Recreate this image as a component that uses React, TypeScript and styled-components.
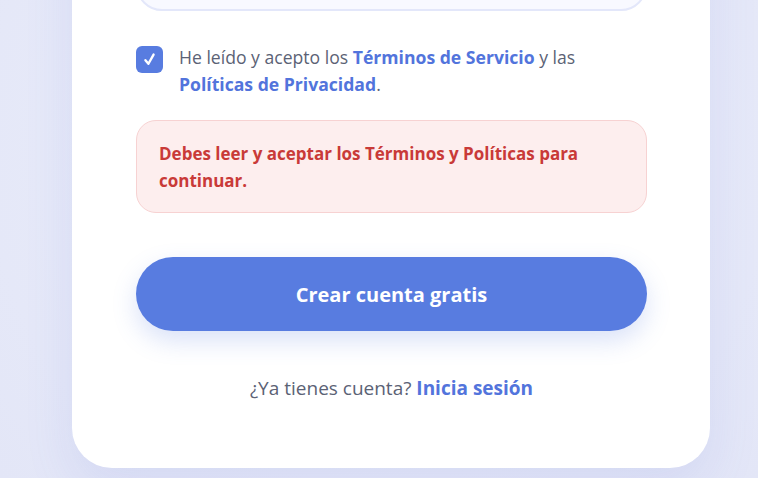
import { createGlobalStyle, styled } from "styled-components";

const GlobalStyle = createGlobalStyle`
    html, body {
        margin: 0;
        padding: 0;
        background: #e6e9f8;
        overflow: hidden;
    }
    body {
        font-family: "Open Sans", "Noto Sans", sans-serif;
    }
`;

const Page = styled.div`
    display: flow-root;
    min-height: 478px;
    padding-left: 72px;
    background: radial-gradient(circle at 50% 30%, #eceffb 0%, #e3e6f7 100%);
`;

const Card = styled.div`
    width: 638px;
    box-sizing: border-box;
    margin-top: -120px;
    padding: 79px 63px 66px 64px;
    background: #ffffff;
    border-radius: 40px;
    box-shadow: 0 20px 50px rgba(90, 110, 210, 0.12);
    display: flex;
    flex-direction: column;
`;

const Field = styled.div`
    height: 52px;
    box-sizing: border-box;
    border: 2px solid #e3e7fa;
    border-radius: 26px;
    background: #f8f9ff;
`;

const TermsRow = styled.label`
    margin-top: 33px;
    display: flex;
    align-items: flex-start;
    gap: 16px;
    font-size: 17.6px;
    line-height: 27px;
    color: #5b6275;
`;

const TermsText = styled.span`
    max-width: 440px;
`;

const Check = styled.span`
    flex: 0 0 auto;
    width: 27px;
    height: 27px;
    margin-top: 2px;
    border-radius: 6px;
    background: #587ce0;
    display: flex;
    align-items: center;
    justify-content: center;
`;

const TextLink = styled.a`
    color: #5274dc;
    font-weight: 700;
    text-decoration: none;
`;

const ErrorBox = styled.div`
    margin-top: 22px;
    padding: 19px 22px 18px 22px;
    border: 1px solid #f7d2d2;
    border-radius: 20px;
    background: #fdeeee;
    color: #c93a38;
    font-weight: 700;
    font-size: 17px;
    line-height: 27px;
`;

const SubmitButton = styled.button`
    margin-top: 44px;
    height: 74px;
    border: none;
    border-radius: 37px;
    background: #587ce0;
    color: #ffffff;
    font-family: inherit;
    font-weight: 700;
    font-size: 20px;
    box-shadow: 0 10px 24px rgba(88, 124, 224, 0.22);
    cursor: pointer;
`;

const Footer = styled.p`
    margin: 43px 0 0;
    text-align: center;
    font-size: 19px;
    line-height: 28px;
    color: #5b6275;
`;

const App = (): React.JSX.Element => {
    return (
        <>
            <GlobalStyle />
            <Page>
                <Card>
                    <Field />
                    <TermsRow>
                        <Check>
                            <svg width="15" height="15" viewBox="0 0 14 14">
                                <path
                                    d="M3.2 7.6 L6 11 L10.8 2.4"
                                    fill="none"
                                    stroke="#ffffff"
                                    strokeWidth="2.2"
                                    strokeLinecap="round"
                                    strokeLinejoin="round"
                                />
                            </svg>
                        </Check>
                        <TermsText>
                            He leído y acepto los{" "}
                            <TextLink href="#">Términos de Servicio</TextLink> y las{" "}
                            <TextLink href="#">Políticas de Privacidad</TextLink>.
                        </TermsText>
                    </TermsRow>
                    <ErrorBox>
                        Debes leer y aceptar los Términos y Políticas para continuar.
                    </ErrorBox>
                    <SubmitButton>Crear cuenta gratis</SubmitButton>
                    <Footer>
                        ¿Ya tienes cuenta? <TextLink href="#">Inicia sesión</TextLink>
                    </Footer>
                </Card>
            </Page>
        </>
    );
};

export default App;
